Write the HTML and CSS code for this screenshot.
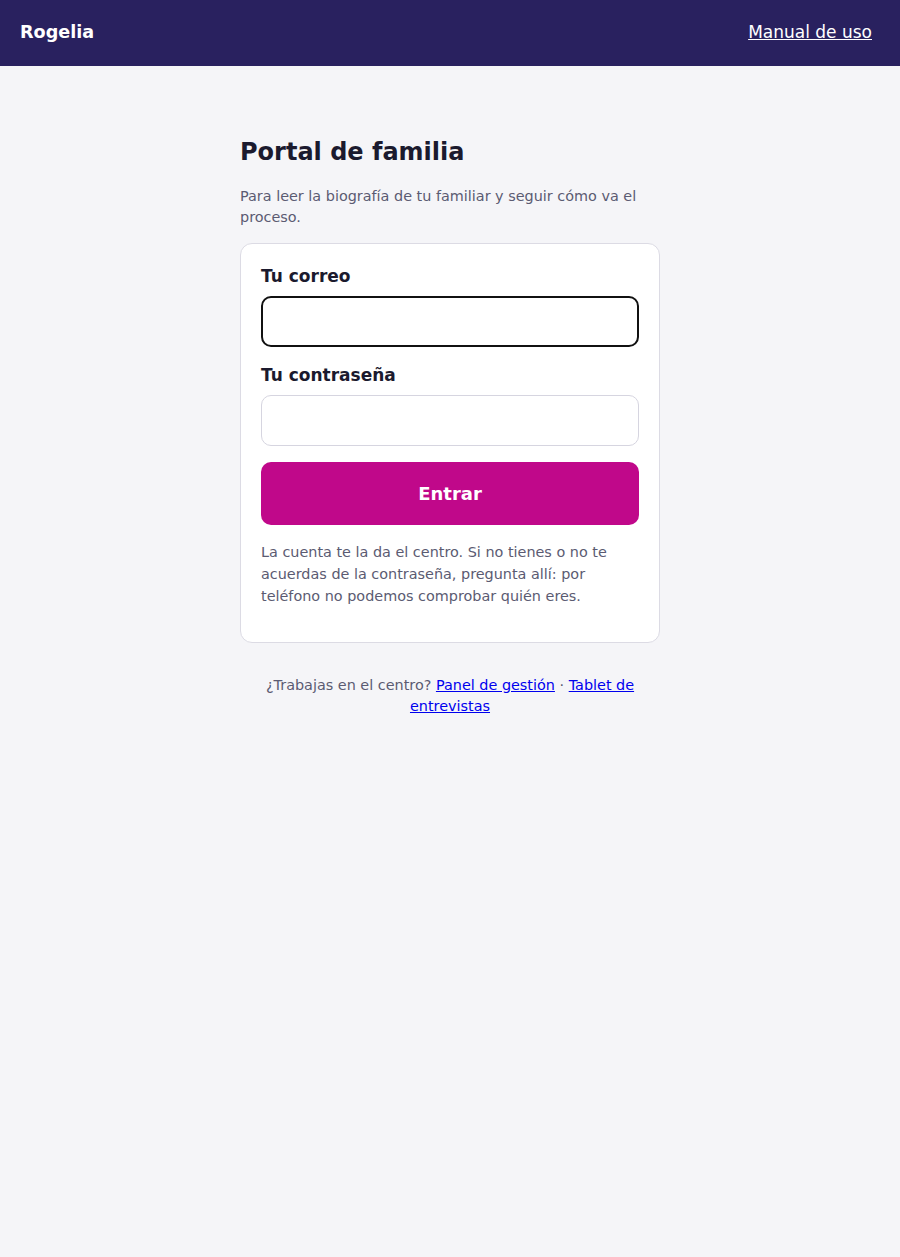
FILE: index.html
```html
<!DOCTYPE html>
<html lang="es">
<head>
    <meta charset="UTF-8">
    <meta name="viewport" content="width=device-width, initial-scale=1.0">
    <title>Rogelia · Portal de familia</title>
    <link rel="stylesheet" href="styles.css">
</head>
<body>
    <header class="topbar">
        <span class="brand">Rogelia</span>
        <a class="manual" href="#">Manual de uso</a>
    </header>

    <main class="container">
        <h1>Portal de familia</h1>
        <p class="intro">Para leer la biografía de tu familiar y seguir cómo va el proceso.</p>

        <form class="card" onsubmit="return false">
            <label for="email">Tu correo</label>
            <input type="email" id="email" class="focused" autofocus>

            <label for="password">Tu contraseña</label>
            <input type="password" id="password">

            <button type="submit">Entrar</button>

            <p class="help">La cuenta te la da el centro. Si no tienes o no te acuerdas de la contraseña, pregunta allí: por teléfono no podemos comprobar quién eres.</p>
        </form>

        <p class="staff">¿Trabajas en el centro? <a href="#">Panel de gestión</a> · <a href="#">Tablet de entrevistas</a></p>
    </main>
</body>
</html>
```

FILE: styles.css
```css
body {
    margin: 0;
    font-family: "DejaVu Sans", sans-serif;
    background-color: #f5f5f8;
    color: #1b1a2e;
}
.topbar {
    height: 66px;
    box-sizing: border-box;
    padding: 0 28px 2px 20px;
    background-color: #29215f;
    color: #fff;
    display: flex;
    align-items: center;
    justify-content: space-between;
}
.brand {
    font-size: 17.6px;
    font-weight: bold;
}
.manual {
    color: #fff;
    font-size: 17px;
}
.container {
    width: 420px;
    margin: 0 auto;
    padding-top: 69px;
}
h1 {
    margin: 0 0 17px;
    font-size: 24px;
    line-height: 34px;
}
.intro {
    margin: 0 0 15px;
    font-size: 14.4px;
    line-height: 21px;
    color: #5b5b72;
}
.card {
    background-color: #fff;
    border: 1px solid #dcdbe4;
    border-radius: 12px;
    padding: 20px 20px 35px;
    display: flex;
    flex-direction: column;
}
label {
    font-size: 17px;
    font-weight: bold;
    line-height: 24px;
    margin-bottom: 8px;
}
input {
    height: 51px;
    box-sizing: border-box;
    border: 1px solid #d6d5e0;
    border-radius: 10px;
    padding: 0 16px;
    font-size: 17px;
    font-family: inherit;
    margin-bottom: 16px;
    outline: none;
}
input:focus, input.focused {
    border: 2px solid #111;
}
button {
    height: 63px;
    border: none;
    border-radius: 10px;
    background-color: #c0088a;
    color: #fff;
    font-family: inherit;
    font-size: 18px;
    font-weight: bold;
    cursor: pointer;
}
.help {
    margin: 16px 0 0;
    font-size: 14.4px;
    line-height: 22px;
    color: #5b5b72;
}
.staff {
    margin: 32px 0 0;
    text-align: center;
    font-size: 14.4px;
    line-height: 21px;
    color: #5b5b72;
}
.staff a {
    color: #0000ee;
}
```
